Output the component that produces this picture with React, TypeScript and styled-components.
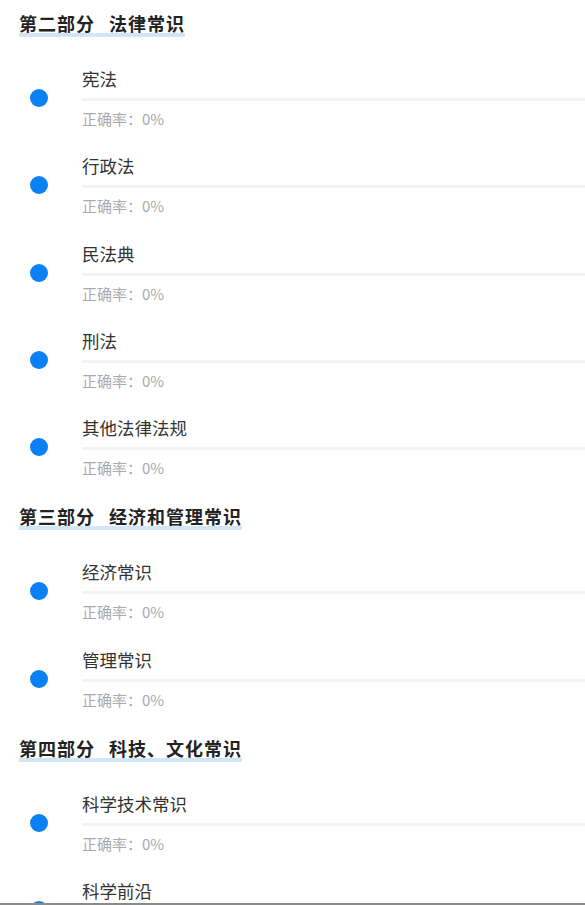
import styled, { createGlobalStyle } from "styled-components";

const sections = [
    {
        no: "第二部分",
        name: "法律常识",
        items: ["宪法", "行政法", "民法典", "刑法", "其他法律法规"],
    },
    {
        no: "第三部分",
        name: "经济和管理常识",
        items: ["经济常识", "管理常识"],
    },
    {
        no: "第四部分",
        name: "科技、文化常识",
        items: ["科学技术常识", "科学前沿"],
    },
];

const App = () => {
    return (
        <>
            <GlobalStyle />
            <Page>
                {sections.map((s) => (
                    <Section key={s.no}>
                        <Heading>
                            <HeadingText>
                                {s.no}
                                <Gap />
                                {s.name}
                            </HeadingText>
                        </Heading>
                        {s.items.map((item) => (
                            <Item key={item}>
                                <Dot />
                                <Body>
                                    <Title>{item}</Title>
                                    <Track />
                                    <Rate>正确率：0%</Rate>
                                </Body>
                            </Item>
                        ))}
                    </Section>
                ))}
            </Page>
            <BottomEdge />
        </>
    );
};

const GlobalStyle = createGlobalStyle`
    html, body {
        margin: 0;
        padding: 0;
        background: #fff;
        overflow: hidden;
    }
    body {
        font-family: "Noto Sans CJK SC", "Noto Sans", sans-serif;
    }
`;

const Page = styled.div`
    height: 905px;
    overflow: hidden;
    padding-top: 11px;
    box-sizing: border-box;
`;

const Section = styled.div`
    display: flex;
    flex-direction: column;
`;

const Heading = styled.div`
    padding-left: 19px;
    height: 57px;
    line-height: 24px;
`;

const HeadingText = styled.span`
    font-size: 18px;
    font-weight: 700;
    color: #222;
    letter-spacing: 1px;
    padding-bottom: 1px;
    background-image: linear-gradient(#d2e5f8, #d2e5f8);
    background-repeat: no-repeat;
    background-size: 100% 4px;
    background-position: 0 100%;
`;

const Gap = styled.span`
    display: inline-block;
    width: 14px;
`;

const Item = styled.div`
    display: flex;
    align-items: flex-start;
    height: 87.25px;
    padding-left: 30px;
    box-sizing: border-box;
`;

const Dot = styled.div`
    width: 18px;
    height: 18px;
    border-radius: 50%;
    background: #0a80f5;
    margin-top: 21px;
    margin-right: 34px;
    flex-shrink: 0;
`;

const Body = styled.div`
    flex: 1;
    display: flex;
    flex-direction: column;
`;

const Title = styled.div`
    font-size: 17.5px;
    line-height: 22px;
    color: #333;
`;

const Track = styled.div`
    height: 3px;
    margin-top: 8px;
    background: #f3f3f3;
`;

const Rate = styled.div`
    margin-top: 8px;
    font-size: 15px;
    line-height: 20px;
    color: #aaa;
`;

const BottomEdge = styled.div`
    position: fixed;
    left: 0;
    right: 0;
    bottom: 0;
    height: 2px;
    background: #8a8a8a;
`;

export default App;
